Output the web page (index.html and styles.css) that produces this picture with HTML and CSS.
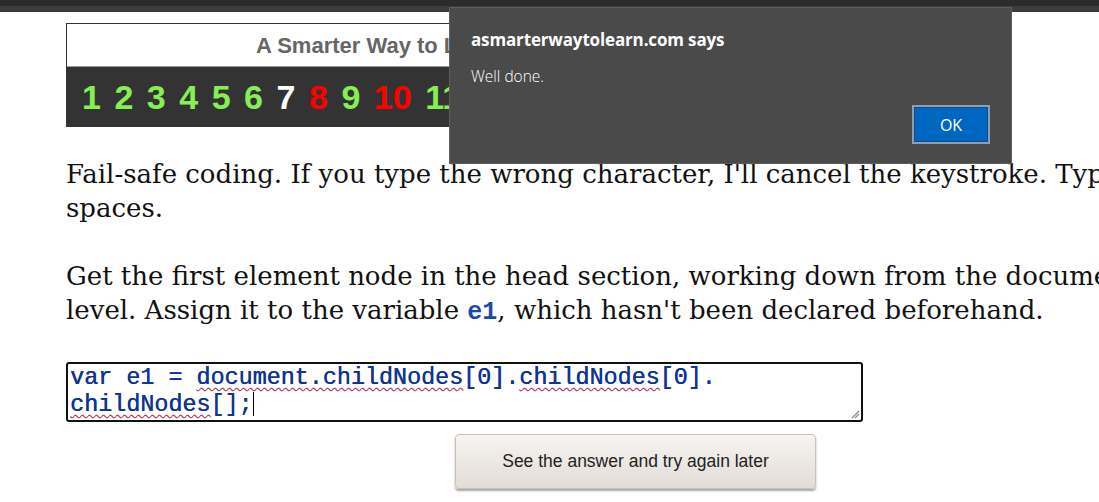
FILE: index.html
```html
<!DOCTYPE html>
<html>
<head>
<meta charset="utf-8">
<link rel="stylesheet" href="styles.css">
</head>
<body>
<div class="topbar"><div class="topbar-dark"></div><div class="topbar-light"></div></div>
<main class="page">
  <div class="banner">
    <div class="banner-title">A Smarter Way to Learn JavaScript</div>
    <div class="banner-nums">
      <span class="done">1</span><span class="done">2</span><span class="done">3</span><span class="done">4</span><span class="done">5</span><span class="done">6</span><span class="cur">7</span><span class="bad">8</span><span class="done">9</span><span class="bad">10</span><span class="done">11</span><span class="done">12</span>
    </div>
  </div>
  <p class="text">Fail-safe coding. If you type the wrong character, I'll cancel the keystroke. Type without<br>spaces.</p>
  <p class="text">Get the first element node in the head section, working down from the document<br>level. Assign it to the variable <code class="var">e1</code>, which hasn't been declared beforehand.</p>
  <div class="editor">
    <div class="code">var e1 = <span class="sp">document.childNodes</span>[0].<span class="sp">childNodes</span>[0].<br><span class="sp">childNodes</span>[];<span class="caret"></span></div>
    <svg class="grip" width="10" height="10" viewBox="0 0 10 10"><path d="M9 2 L2 9 M9 5 L5 9" stroke="#888" stroke-width="1.2"/></svg>
  </div>
  <div class="btn-row"><button class="answer">See the answer and try again later</button></div>
</main>
<div class="dialog">
  <div class="dlg-title">asmarterwaytolearn.com says</div>
  <div class="dlg-msg">Well done.</div>
  <div class="dlg-actions"><button class="ok">OK</button></div>
</div>
</body>
</html>
```
FILE: styles.css
```css
html, body { margin: 0; padding: 0; background: #fff; overflow: hidden; }
body { width: 1099px; height: 502px; position: relative; }
.topbar-dark { height: 6px; background: #2b2b2b; }
.topbar-light { height: 6px; background: #3c3c3c; }
.page { margin-left: 66px; width: 1200px; }
.banner { margin-top: 11px; width: 382px; border-top: 1px solid #333; border-left: 1px solid #333; overflow: hidden; }
.banner-title { height: 42px; border-bottom: 1px solid #999; font-family: "Liberation Sans", Arial, sans-serif; font-weight: bold; font-size: 22px; color: #666; line-height: 44px; padding-left: 189px; background: #fff; white-space: nowrap; overflow: hidden; }
.banner-nums { height: 60px; background: #333; font-family: "Liberation Sans", Arial, sans-serif; font-weight: bold; font-size: 34px; line-height: 60px; padding-left: 15px; display: flex; gap: 13.5px; overflow: hidden; }
.done { color: #88ee55; }
.cur { color: #fff; }
.bad { color: #ff0000; }
.text { font-family: "DejaVu Serif", Georgia, serif; font-size: 26px; line-height: 34px; color: #111; margin: 30px 0 0 0; white-space: nowrap; }
.text + .text { margin-top: 34px; }
.var { font-family: "Liberation Mono", "Courier New", monospace; font-weight: bold; color: #1a4aa8; font-size: 25px; }
.editor { position: relative; margin-top: 32px; width: 793px; height: 56px; border: 2px solid #111; border-radius: 3px; }
.code { font-family: "Liberation Mono", "Courier New", monospace; font-size: 23.4px; line-height: 27px; color: #0f3592; padding: 1px 0 0 2px; white-space: nowrap; text-shadow: 0.4px 0 0 #0f3592; }
.sp { text-decoration: underline wavy #e33; text-decoration-thickness: 1px; text-underline-offset: 3px; }
.caret { display: inline-block; width: 1px; height: 24px; background: #000; vertical-align: -5px; }
.grip { position: absolute; right: 1px; bottom: 1px; }
.btn-row { margin-top: 12px; padding-left: 389px; }
.answer { width: 361px; height: 55px; border: 1px solid #c8c2bc; border-radius: 4px; background: linear-gradient(#f6f4f2, #e2dcd6); box-shadow: 0 2px 2px rgba(0,0,0,0.35); font-family: "Liberation Sans", Arial, sans-serif; font-size: 17.5px; color: #222; }
.dialog { position: absolute; left: 449px; top: 7px; width: 563px; height: 157px; background: #4a4a4a; border: 1px solid #5e5e5e; box-sizing: border-box; font-family: "Open Sans", "Segoe UI", sans-serif; color: #fff; }
.dlg-title { font-weight: bold; font-size: 17px; line-height: 20px; margin: 22px 0 0 21px; letter-spacing: -0.15px; }
.dlg-msg { font-size: 15.5px; font-weight: 300; line-height: 20px; margin: 16px 0 0 21px; }
.dlg-actions { display: flex; justify-content: flex-end; padding-right: 21px; margin-top: 19px; }
.ok { width: 78px; height: 39px; background: #0067c0; border: 2px solid #8c9fb4; box-shadow: inset 0 0 0 1px #0a4f8f; color: #fff; font-family: "Open Sans", "Segoe UI", sans-serif; font-size: 16px; padding: 0; }
```
